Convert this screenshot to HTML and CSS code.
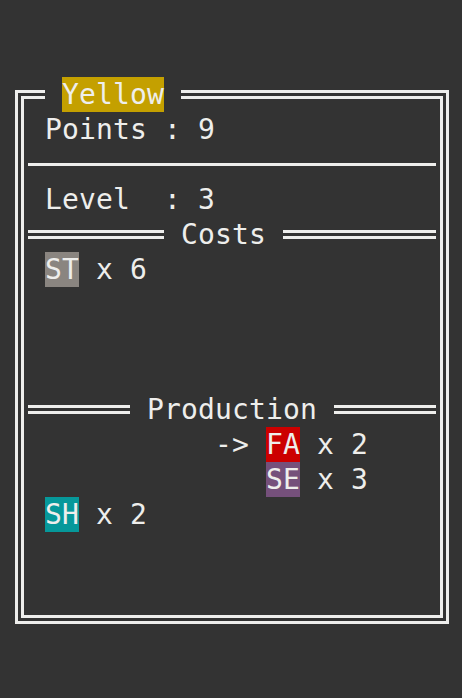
FILE: index.html
```html
<!DOCTYPE html>
<html>
<head>
<meta charset="utf-8">
<link rel="stylesheet" href="styles.css">
</head>
<body>
<div class="screen">
  <div class="panel">
    <div class="frame"></div>
    <div class="title r1"><span class="tag yellow">Yellow</span></div>
    <div class="text r2 c3">Points : 9</div>
    <div class="rule single r3"></div>
    <div class="text r4 c3">Level  : 3</div>
    <div class="rule double r5 costs-left"></div>
    <div class="text r5 costs-label">Costs</div>
    <div class="rule double r5 costs-right"></div>
    <div class="text r6 c3"><span class="tag stone">ST</span> x 6</div>
    <div class="rule double r10 prod-left"></div>
    <div class="text r10 prod-label">Production</div>
    <div class="rule double r10 prod-right"></div>
    <div class="text r11 c13">-&gt; <span class="tag red">FA</span> x 2</div>
    <div class="text r12 c16"><span class="tag purple">SE</span> x 3</div>
    <div class="text r13 c3"><span class="tag teal">SH</span> x 2</div>
  </div>
</div>
</body>
</html>
```
FILE: styles.css
```css
html, body {
  margin: 0;
  padding: 0;
  background: #333333;
}
body {
  width: 462px;
  height: 698px;
  overflow: hidden;
  color: #eeeeec;
  font-family: "DejaVu Sans Mono", "Liberation Mono", monospace;
  font-size: 28px;
  letter-spacing: 0.14px;
  line-height: 35px;
}
.screen {
  padding: 77px 0 0 11px;
}
.panel {
  display: grid;
  grid-template-columns: repeat(26, 17px);
  grid-template-rows: repeat(16, 35px);
}
.frame {
  grid-row: 1 / 17;
  grid-column: 1 / 27;
  margin: 13px 4px;
  border: 9px double #eeeeec;
}
.title {
  grid-column: 3 / 11;
  background: #333333;
  padding-left: 17px;
  white-space: pre;
}
.text {
  white-space: pre;
  grid-column-end: span 20;
}
.tag {
  display: inline-block;
  vertical-align: top;
  line-height: 35px;
  height: 35px;
}
.yellow { background: #c4a000; }
.stone { background: #8a8580; }
.red { background: #cc0000; }
.purple { background: #75507b; }
.teal { background: #06989a; }

.rule { align-self: center; }
.rule.single {
  grid-column: 2 / 26;
  height: 3px;
  background: #eeeeec;
}
.rule.double {
  height: 3px;
  border-top: 3px solid #eeeeec;
  border-bottom: 3px solid #eeeeec;
}
.costs-left { grid-column: 2 / 10; }
.costs-label { grid-column: 11 / 16; }
.costs-right { grid-column: 17 / 26; }
.prod-left { grid-column: 2 / 8; }
.prod-label { grid-column: 9 / 19; }
.prod-right { grid-column: 20 / 26; }

.r1 { grid-row: 1; }
.r2 { grid-row: 2; }
.r3 { grid-row: 3; }
.r4 { grid-row: 4; }
.r5 { grid-row: 5; }
.r6 { grid-row: 6; }
.r10 { grid-row: 10; }
.r11 { grid-row: 11; }
.r12 { grid-row: 12; }
.r13 { grid-row: 13; }
.c3 { grid-column-start: 3; }
.c13 { grid-column-start: 13; }
.c16 { grid-column-start: 16; }
```
